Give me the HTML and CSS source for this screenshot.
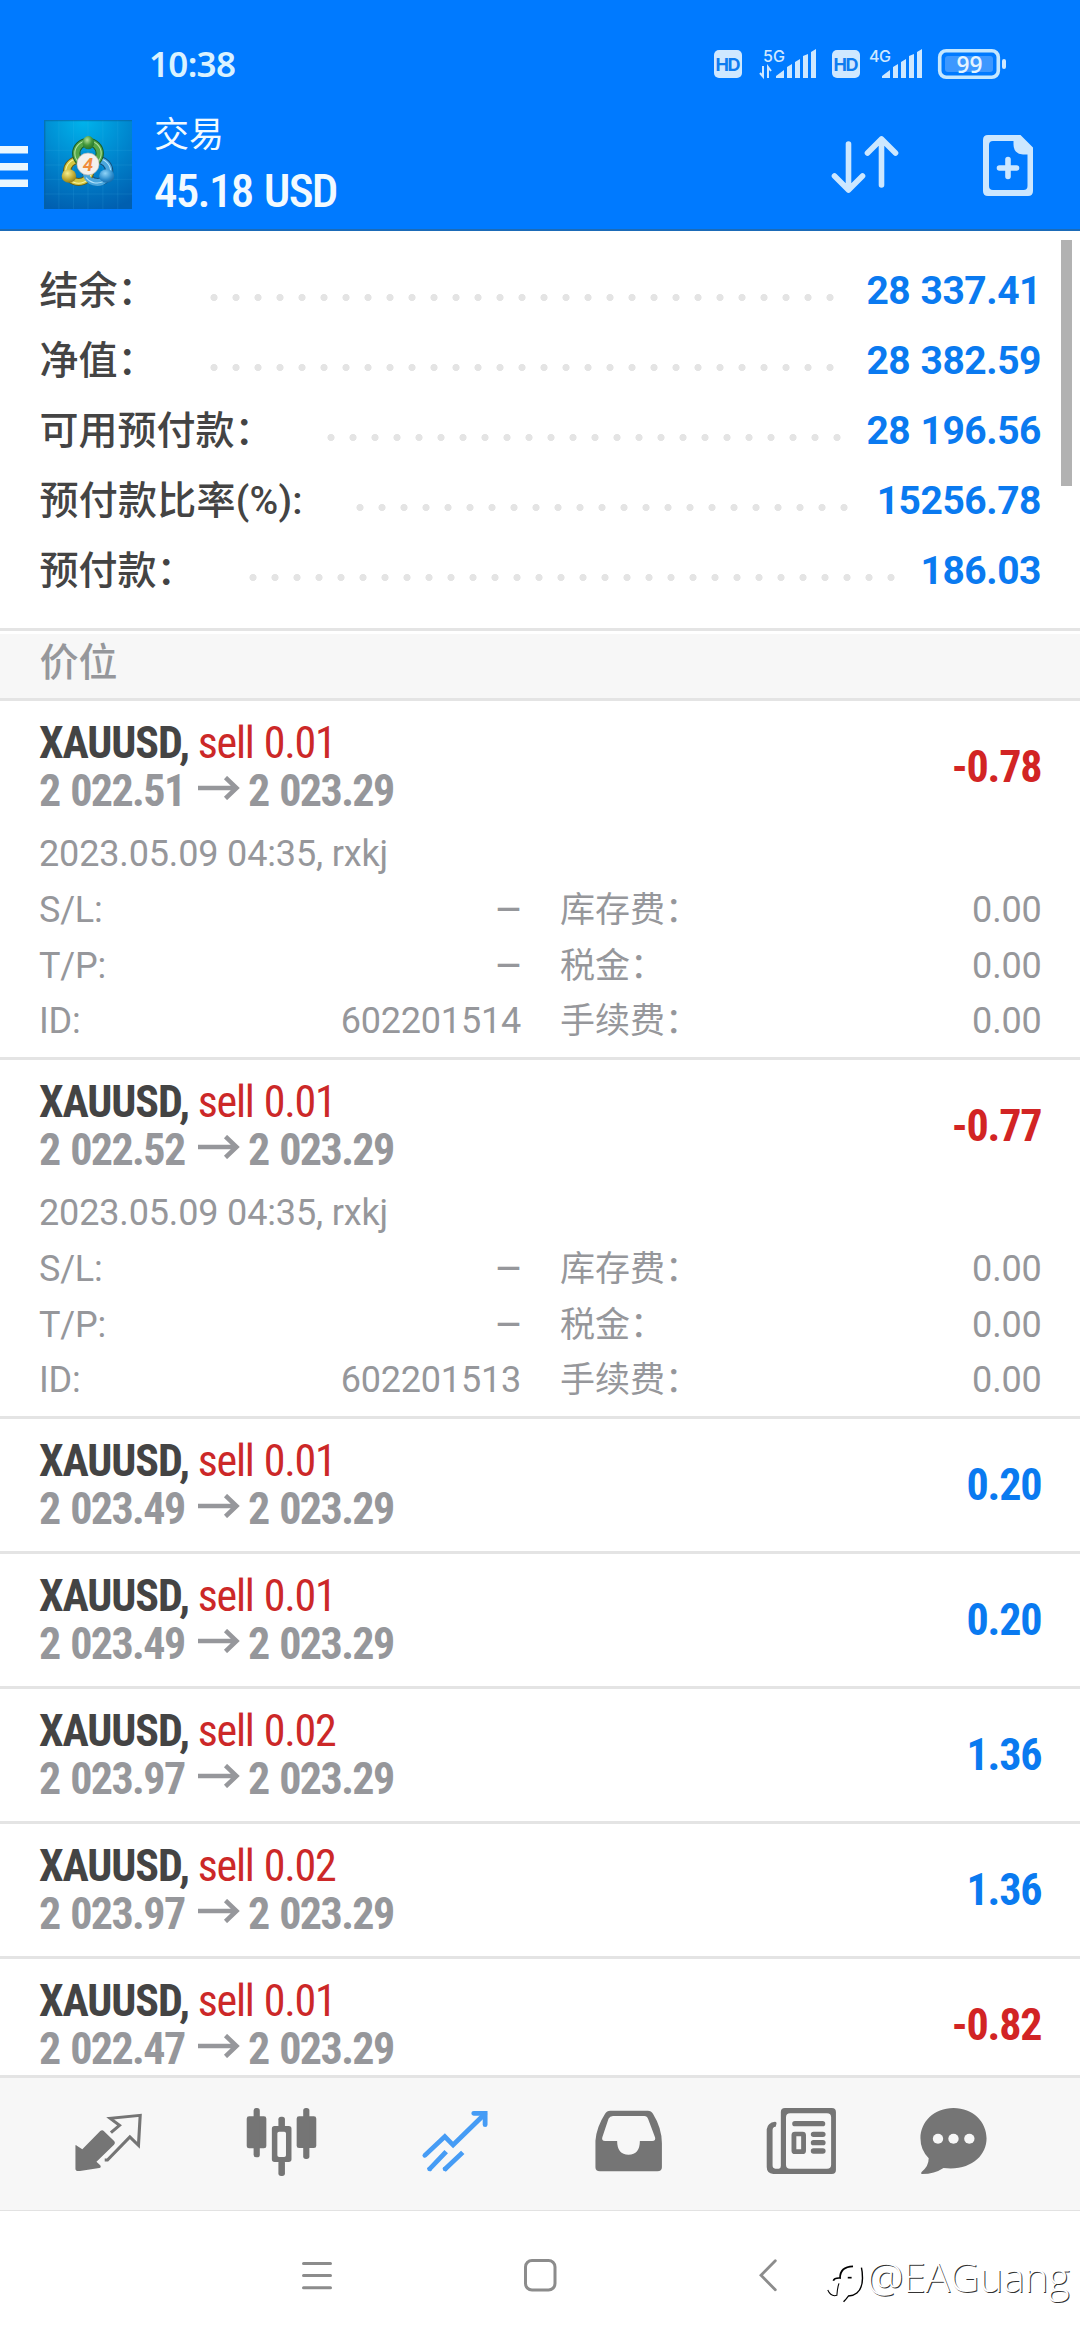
FILE: index.html
```html
<!DOCTYPE html>
<html lang="zh-CN">
<head>
<meta charset="utf-8">
<title>交易</title>
<link rel="stylesheet" href="styles.css">
</head>
<body>
<div class="phone">
  <header class="header">
    <div class="status">
      <span class="clock">10:38</span>
      <svg class="status-icons" width="296" height="40" viewBox="0 0 296 40">
        <g fill="#cfe8ff">
          <rect x="4" y="7" width="28" height="28" rx="5"/>
          <rect x="122" y="7" width="28" height="28" rx="5"/>
          <path d="M66 35V33L74 27V35ZM77 35V24L82 21V35ZM85 35V19L90 16V35ZM93 35V13L98 11V35ZM101 35V9L106 6V35Z"/>
          <path d="M172 35V33L180 27V35ZM183 35V24L188 21V35ZM191 35V19L196 16V35ZM199 35V13L204 11V35ZM207 35V9L212 6V35Z"/>
          <rect x="292" y="16" width="4" height="10" rx="2"/>
        </g>
        <path d="M50 30L53 33.5V23M61 28L58 24V35" fill="none" stroke="#cfe8ff" stroke-width="2"/>
        <rect x="235" y="13" width="48" height="16" rx="3" fill="#3d98ff"/>
        <rect x="229.7" y="7.7" width="58.6" height="26.6" rx="6.5" fill="none" stroke="#c4e7ff" stroke-width="3.6"/>
        <g class="glyphs">
          <text x="18" y="27.5" text-anchor="middle" class="hd" textLength="25">HD</text>
          <text x="136" y="27.5" text-anchor="middle" class="hd" textLength="25">HD</text>
          <text x="53" y="19" class="net" textLength="22">5G</text>
          <text x="159" y="19" class="net" textLength="22">4G</text>
          <text x="259.5" y="29.500" text-anchor="middle" class="pct" textLength="26" lengthAdjust="spacingAndGlyphs">99</text>
        </g>
      </svg>
    </div>
    <div class="toolbar">
      <svg class="burger" width="28" height="41" viewBox="0 0 28 41"><path d="M0 0H28V7.5H0ZM0 17H28V24.5H0ZM0 33.5H28V41H0Z" fill="#eaf7ff"/></svg>
      <svg class="logo" width="88" height="89" viewBox="129 361 254 267" preserveAspectRatio="none">
        <defs>
          <radialGradient id="bg" cx=".45" cy="0" r="1.05"><stop offset="0" stop-color="#00b4ec"/><stop offset=".55" stop-color="#0083cc"/><stop offset="1" stop-color="#005fb0"/></radialGradient>
          <radialGradient id="gr" cx=".4" cy=".3" r=".8"><stop offset="0" stop-color="#b4e29a"/><stop offset=".5" stop-color="#43973a"/><stop offset="1" stop-color="#1d6a2c"/></radialGradient>
          <radialGradient id="ye" cx=".4" cy=".3" r=".8"><stop offset="0" stop-color="#f6ef8e"/><stop offset=".6" stop-color="#bba52c"/><stop offset="1" stop-color="#7d7018"/></radialGradient>
          <radialGradient id="bl" cx=".4" cy=".3" r=".8"><stop offset="0" stop-color="#8fd4f8"/><stop offset=".6" stop-color="#2c8ccc"/><stop offset="1" stop-color="#11609e"/></radialGradient>
        </defs>
        <rect x="129" y="361" width="254" height="267" fill="url(#bg)"/>
        <path d="M129 452H383M129 496H383M129 539H383M129 583H383M214 361V628M256 361V628M299 361V628M342 361V628M172 361V628" stroke="#4cc0f0" stroke-opacity=".2" stroke-width="2"/>
        <path d="M129 363H383M131 361V628" stroke="#08639e" stroke-opacity=".6" stroke-width="4"/>
        <g fill="none">
          <g stroke="#14507c" stroke-width="24"><circle cx="284" cy="514" r="33"/></g>
          <circle cx="284" cy="514" r="33" stroke="#4aa6dc" stroke-width="18"/>
          <circle cx="284" cy="514" r="37" stroke="#b2e2fa" stroke-width="3"/>
          <circle cx="229" cy="514" r="33" stroke="#675d14" stroke-width="24"/>
          <circle cx="229" cy="514" r="33" stroke="#d3c641" stroke-width="18"/>
          <circle cx="229" cy="514" r="37" stroke="#f6f2a0" stroke-width="3"/>
          <circle cx="256" cy="461" r="34" stroke="#1b5e27" stroke-width="24"/>
          <circle cx="256" cy="461" r="34" stroke="#54a748" stroke-width="18"/>
          <circle cx="256" cy="461" r="38" stroke="#b4e2a0" stroke-width="3"/>
          <path d="M250 522A33 33 0 0 0 306 540" stroke="#4aa6dc" stroke-width="18"/>
          <path d="M250 534A40 40 0 0 0 300 546" stroke="#b2e2fa" stroke-width="3"/>
        </g>
        <ellipse cx="257" cy="429" rx="17" ry="20" fill="url(#gr)"/>
        <ellipse cx="201" cy="529" rx="21" ry="20" fill="url(#ye)"/>
        <ellipse cx="310" cy="529" rx="22" ry="20" fill="url(#bl)"/>
        <ellipse cx="256" cy="493" rx="32" ry="33" fill="#f3f0ec" stroke="#b7b4ae" stroke-width="2"/>
        <text x="256" y="513" text-anchor="middle" class="four">4</text>
      </svg>
      <div class="heading">
        <div class="screen-name">交易</div>
        <div class="total cond"><span>45.18 USD</span></div>
      </div>
      <svg class="sort" width="68" height="60" viewBox="831 135 68 60"><path d="M848.5 144V190M834.5 176L848.5 190L862.5 176M881.5 185V139M867.5 153L881.5 139L895.5 153" fill="none" stroke="#cce7ff" stroke-width="5.6" stroke-linecap="round" stroke-linejoin="round"/></svg>
      <svg class="add" width="50" height="61" viewBox="983 134.500 50 61"><path fill-rule="evenodd" fill="#cce7ff" d="M988 134.500H1020.500L1033 147V190.500Q1033 195.500 1028 195.500H988Q983 195.500 983 190.500V139.500Q983 134.500 988 134.500ZM993 140.500Q989 140.500 989 144.500V185.500Q989 189.500 993 189.500H1023.500Q1027.500 189.500 1027.500 185.500V154H1023Q1013.500 153 1013.500 144V140.500Z"/><path d="M1008 159V176M999.500 167.500H1016.500" stroke="#cce7ff" stroke-width="5.600" stroke-linecap="round"/></svg>
    </div>
  </header>

  <main class="content">
    <section class="summary">
      <div class="sum-row"><span>结余：</span><i class="dots" style="--dots:29"></i><b>28 337.41</b></div>
      <div class="sum-row"><span>净值：</span><i class="dots" style="--dots:29"></i><b>28 382.59</b></div>
      <div class="sum-row"><span>可用预付款：</span><i class="dots" style="--dots:24"></i><b>28 196.56</b></div>
      <div class="sum-row"><span class="ratio">预付款比率(%):</span><i class="dots" style="--dots:23"></i><b>15256.78</b></div>
      <div class="sum-row"><span>预付款：</span><i class="dots" style="--dots:30"></i><b>186.03</b></div>
      <div class="scrollbar"></div>
    </section>
    <h2 class="section-title">价位</h2>

    <article class="pos">
      <div class="pos-main">
        <div>
          <div class="line cond"><b>XAUUSD,</b><span class="sell">sell 0.01</span></div>
          <div class="line cond price"><b>2 022.51</b><svg class="arrow" width="42" height="24" viewBox="0 0 42 24"><path d="M0 12H38M27.500 1.500L38.500 12L27.500 22.500"/></svg><b>2 023.29</b></div>
        </div>
        <div class="profit cond loss">-0.78</div>
      </div>
      <div class="opened">2023.05.09 04:35, rxkj</div>
      <dl class="details">
        <dt>S/L:</dt><dd class="none">–</dd><dt>库存费：</dt><dd>0.00</dd>
        <dt>T/P:</dt><dd class="none">–</dd><dt>税金：</dt><dd>0.00</dd>
        <dt>ID:</dt><dd>602201514</dd><dt>手续费：</dt><dd>0.00</dd>
      </dl>
    </article>
    <article class="pos">
      <div class="pos-main">
        <div>
          <div class="line cond"><b>XAUUSD,</b><span class="sell">sell 0.01</span></div>
          <div class="line cond price"><b>2 022.52</b><svg class="arrow" width="42" height="24" viewBox="0 0 42 24"><path d="M0 12H38M27.500 1.500L38.500 12L27.500 22.500"/></svg><b>2 023.29</b></div>
        </div>
        <div class="profit cond loss">-0.77</div>
      </div>
      <div class="opened">2023.05.09 04:35, rxkj</div>
      <dl class="details">
        <dt>S/L:</dt><dd class="none">–</dd><dt>库存费：</dt><dd>0.00</dd>
        <dt>T/P:</dt><dd class="none">–</dd><dt>税金：</dt><dd>0.00</dd>
        <dt>ID:</dt><dd>602201513</dd><dt>手续费：</dt><dd>0.00</dd>
      </dl>
    </article>
    <article class="pos">
      <div class="pos-main">
        <div>
          <div class="line cond"><b>XAUUSD,</b><span class="sell">sell 0.01</span></div>
          <div class="line cond price"><b>2 023.49</b><svg class="arrow" width="42" height="24" viewBox="0 0 42 24"><path d="M0 12H38M27.500 1.500L38.500 12L27.500 22.500"/></svg><b>2 023.29</b></div>
        </div>
        <div class="profit cond">0.20</div>
      </div>
    </article>
    <article class="pos">
      <div class="pos-main">
        <div>
          <div class="line cond"><b>XAUUSD,</b><span class="sell">sell 0.01</span></div>
          <div class="line cond price"><b>2 023.49</b><svg class="arrow" width="42" height="24" viewBox="0 0 42 24"><path d="M0 12H38M27.500 1.500L38.500 12L27.500 22.500"/></svg><b>2 023.29</b></div>
        </div>
        <div class="profit cond">0.20</div>
      </div>
    </article>
    <article class="pos">
      <div class="pos-main">
        <div>
          <div class="line cond"><b>XAUUSD,</b><span class="sell">sell 0.02</span></div>
          <div class="line cond price"><b>2 023.97</b><svg class="arrow" width="42" height="24" viewBox="0 0 42 24"><path d="M0 12H38M27.500 1.500L38.500 12L27.500 22.500"/></svg><b>2 023.29</b></div>
        </div>
        <div class="profit cond">1.36</div>
      </div>
    </article>
    <article class="pos">
      <div class="pos-main">
        <div>
          <div class="line cond"><b>XAUUSD,</b><span class="sell">sell 0.02</span></div>
          <div class="line cond price"><b>2 023.97</b><svg class="arrow" width="42" height="24" viewBox="0 0 42 24"><path d="M0 12H38M27.500 1.500L38.500 12L27.500 22.500"/></svg><b>2 023.29</b></div>
        </div>
        <div class="profit cond">1.36</div>
      </div>
    </article>
    <article class="pos">
      <div class="pos-main">
        <div>
          <div class="line cond"><b>XAUUSD,</b><span class="sell">sell 0.01</span></div>
          <div class="line cond price"><b>2 022.47</b><svg class="arrow" width="42" height="24" viewBox="0 0 42 24"><path d="M0 12H38M27.500 1.500L38.500 12L27.500 22.500"/></svg><b>2 023.29</b></div>
        </div>
        <div class="profit cond loss">-0.82</div>
      </div>
    </article>
  </main>

  <nav class="tabs">
    <svg viewBox="194.500 132 241 240" preserveAspectRatio="none"><path fill="#757575" d="M219 258Q219 253 223 257L239 268L291 213Q297 208 302 214L332 244Q336 249 331 254L280 305L291 316Q295 323 288 324L232 333Q219 335 219 326Z"/><path fill="none" stroke="#757575" stroke-width="9" stroke-linejoin="miter" d="M322 218L347 196L320 175L407 166L402 256L377 231L312 300H304"/></svg>
    <svg viewBox="695.500 132 241 240" preserveAspectRatio="none"><g fill="#757575"><rect x="715" y="169" width="57" height="96" rx="7"/><rect x="735" y="144" width="18" height="148" rx="8"/><rect x="860" y="169" width="57" height="95" rx="7"/><rect x="879" y="144" width="18" height="153" rx="8"/><rect x="807" y="170" width="19" height="34" rx="8"/><rect x="807" y="300" width="19" height="48" rx="8"/><path fill-rule="evenodd" d="M796 198H837Q845 198 845 206V298Q845 306 837 306H796Q788 306 788 298V206Q788 198 796 198ZM809 215Q804 215 804 220V286Q804 291 809 291H824Q829 291 829 286V220Q829 215 824 215Z"/></g></svg>
    <svg viewBox="1199.500 132 241 240" preserveAspectRatio="none"><g fill="none" stroke="#469cf5" stroke-width="14"><g stroke-linecap="round"><path d="M1373 160H1406V194"/><path d="M1231 286L1289 230L1313 255L1405 162"/></g><path d="M1242 330L1293 275M1287 330L1341 277"/></g><g fill="#469cf5"><circle cx="1245" cy="327" r="7"/><circle cx="1290" cy="327" r="7"/></g></svg>
    <svg viewBox="133.500 132 241 240" preserveAspectRatio="none"><path fill="#757575" fill-rule="evenodd" d="M201 152H310Q320 152 325 161Q351 204 351 250V322Q351 334 338 334H171Q158 334 158 322V242Q161 201 186 161Q191 152 201 152ZM209 168Q200 168 196 176L178 232Q175 243 186 243H221Q221 284 254 284Q287 284 287 243H323Q334 243 331 232L311 177Q308 168 300 168Z"/></svg>
    <svg viewBox="637.500 132 241 240" preserveAspectRatio="none"><path fill="#757575" fill-rule="evenodd" d="M710 144H846Q858 144 858 156V330Q858 342 846 342H676Q657 340 657 321V208Q659 188 681 185Q687 185 685 193L683 200Q674 200 674 211V316Q674 326 682 326H692Q698 326 698 318V156Q698 144 710 144ZM725 160Q713 160 713 172V314Q713 326 725 326H832Q844 326 844 314V172Q844 160 832 160Z"/><path fill="none" stroke="#757575" stroke-width="16" stroke-linecap="round" d="M739 191H819M793 223H820M793 248H820M793 273H820"/><rect x="736" y="222" width="28" height="53" rx="3" fill="none" stroke="#757575" stroke-width="14"/></svg>
    <svg viewBox="1078.500 132 241 240" preserveAspectRatio="none"><path fill="#757575" d="M1199 144C1256 144 1295 186 1295 235C1295 288 1248 334 1170 324Q1144 342 1108 342Q1102 341 1107 335Q1127 319 1127 295Q1103 270 1103 235C1103 186 1142 144 1199 144Z"/><g fill="#f7f7f7"><circle cx="1154" cy="236" r="15"/><circle cx="1199" cy="236" r="15"/><circle cx="1245" cy="236" r="15"/></g></svg>
  </nav>
  <footer class="system">
    <svg width="30" height="34" viewBox="0 0 30 34"><path d="M1.500 4.500H28.500M1.500 16.600H28.500M1.500 28.700H28.500" stroke="#8c8c8c" stroke-width="3" stroke-linecap="round"/></svg>
    <svg width="33" height="34" viewBox="0 0 33 34"><rect x="1.500" y="1.500" width="29.500" height="29.500" rx="6.500" fill="none" stroke="#8c8c8c" stroke-width="3"/></svg>
    <svg width="18" height="34" viewBox="0 0 18 34"><path d="M16.300 1.800L2 16.300L16.300 30.800" fill="none" stroke="#8c8c8c" stroke-width="2.800" stroke-linecap="round"/></svg>
    <div class="watermark">
      <svg width="40" height="42" viewBox="826 608 114 126" preserveAspectRatio="none"><g fill="none" stroke="#000"><path d="M847 667Q850 658 866 659Q866 625 903 624" stroke-width="5"/><path d="M888 658H899" stroke-width="5"/><path d="M927 628Q930 640 930 660Q930 690 914 704Q905 712 890 713Q884 722 876 730" stroke-width="4"/><path d="M863 675Q858 690 857 711Q840 716 831 695" stroke-width="3"/></g></svg>
      <span>@EAGuang</span>
    </div>
  </footer>
</div>
</body>
</html>
```
FILE: styles.css
```css
* { box-sizing: border-box; }
body { margin: 0; background: #fff; font-family: Roboto, "Noto Sans CJK SC", sans-serif; }
svg { display: block; flex: none; }
.phone { width: 1080px; height: 2340px; display: flex; flex-direction: column; overflow: hidden; background: #fff; }

.header { flex: none; height: 231px; background: #007aff; border-bottom: 2px solid #1b6bb8; color: #f2faff; }
.status { height: 107px; padding: 43px 74px 0 149px; display: flex; justify-content: space-between; align-items: flex-start; }
.clock { font: 600 35px/42px "Noto Sans", sans-serif; letter-spacing: -.7px; color: #d9f2ff; }
.status-icons { overflow: visible; }
.hd { font: 700 18px Inter, sans-serif; fill: #0f7cf0; }
.net { font: 500 16px Inter, sans-serif; fill: #cfe8ff; }
.pct { font: 600 23px "Open Sans", sans-serif; fill: #e4f4ff; }
.four { font: italic 700 54px Roboto, sans-serif; fill: #f08c3c; }
.toolbar { height: 122px; display: flex; align-items: flex-start; padding-right: 47px; }
.burger { margin-top: 39px; margin-right: 16px; }
.logo { margin-top: 13px; margin-right: 22px; }
.heading { flex: 1; }
.screen-name { font-size: 35px; line-height: 52px; height: 52px; padding-top: 3px; }
.sort { margin-top: 28px; margin-right: 84px; }
.add { margin-top: 28px; }

.cond { font-family: "Roboto Condensed", Roboto, sans-serif; font-stretch: 75%; letter-spacing: -1.100px; white-space: nowrap; }
.total { font-size: 47px; line-height: 64px; font-weight: 500; letter-spacing: -1.700px; word-spacing: 2px; }

.content { flex: none; height: 1844px; overflow: hidden; }
.summary { position: relative; height: 400px; padding: 25px 39px 0 39.500px; border-bottom: 3px solid #e4e4e4; }
.sum-row { height: 70px; line-height: 70px; display: flex; font-size: 39px; font-weight: 500; color: #444; white-space: nowrap; }
.sum-row b { margin-left: auto; font-weight: 700; color: #0a7af0; letter-spacing: -.450px; word-spacing: 1px; }
.ratio { letter-spacing: .250px; }
.dots { flex: none; width: calc(var(--dots) * 22px); height: 7px; margin: 38px 0 0 46px; background: radial-gradient(circle, #e4e4e4 3.200px, transparent 3.900px) 0 0 / 22px 7px repeat-x; }
.scrollbar { position: absolute; right: 8px; top: 9px; width: 11px; height: 246px; background: #b2b2b2; }
.section-title { height: 70px; margin: 0; padding-left: 39.500px; border-top: 3px solid #fff; border-bottom: 3px solid #e4e4e4; background: #f7f7f7; color: #96979b; font-size: 39px; font-weight: 500; line-height: 58px; }

.pos { padding: 18px 38.500px 0 39px; min-height: 135px; border-bottom: 3px solid #e4e4e4; }
.pos:has(.details) { height: 359px; }
.pos-main { display: flex; justify-content: space-between; align-items: center; }
.line { display: flex; height: 48px; font-size: 44px; line-height: 48px; color: #444; }
.sell { margin-left: 9px; color: #cc2828; letter-spacing: -1.300px; word-spacing: 1.500px; }
.price { color: #96979b; letter-spacing: -1.600px; word-spacing: 2px; }
.arrow { margin: 9px 8px 0 13.500px; }
.arrow path { fill: none; stroke: #96979b; stroke-width: 4.500; }
.profit { font-size: 44px; line-height: 48px; font-weight: 700; color: #0a7af0; margin-top: -1px; }
.loss { color: #d22424; }
.opened { margin-top: 11px; height: 56px; line-height: 56px; font-size: 36px; letter-spacing: -.150px; color: #96979b; }
.details { margin: 0; padding-top: 1px; display: grid; grid-template-columns: 160px 322px 240px 1fr; grid-auto-rows: 55.500px; line-height: 55.500px; font-size: 36px; letter-spacing: -.200px; color: #96979b; }
.details dt:nth-of-type(even) { padding-left: 39px; font-size: 35px; letter-spacing: 0; white-space: nowrap; }
.details dd { margin: 0; text-align: right; }
.details .none { font-size: 44px; margin-right: -2px; }

.tabs { flex: none; height: 136px; padding-left: 22px; border-top: 3px solid #e4e4e4; border-bottom: 1px solid #e2e2e2; background: #f7f7f7; display: grid; grid-template-columns: repeat(5, 173.300px) 130px; place-items: center; }
.tabs svg { width: 83px; height: 80px; }
.system { position: relative; flex: 1; display: grid; grid-template-columns: 222px 235px 18px; padding: 48px 0 0 302px; }
.watermark { position: absolute; left: 826px; top: 50px; display: flex; align-items: flex-start; }
.watermark span { margin: -6px 0 0 1px; font: 300 41px/42px "Open Sans", "Noto Sans", sans-serif; letter-spacing: -.3px; color: #fff; text-shadow: 1px 1px 0 #333; }
```
